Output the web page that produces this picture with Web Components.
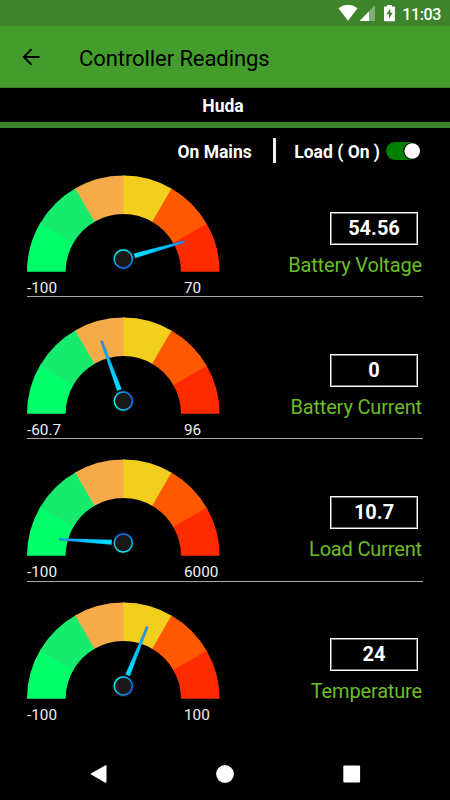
<!DOCTYPE html>
<html lang="en">
<head>
<meta charset="utf-8">
<title>Controller Readings</title>
<style>
    body {
        margin: 0;
        background: #000;
        font-family: Roboto, "Noto Sans", sans-serif;
    }
</style>
</head>
<body>
<controller-screen>
    <status-bar time="11:03"></status-bar>
    <app-bar>Controller Readings</app-bar>
    <site-name>Huda</site-name>
    <power-status mains="On Mains" load="Load ( On )"></power-status>
    <reading-row label="Battery Voltage" value="54.56" min="-100" max="70" angle="74.1"></reading-row>
    <reading-row label="Battery Current" value="0" min="-60.7" max="96" angle="-19.9"></reading-row>
    <reading-row label="Load Current" value="10.7" min="-100" max="6000" angle="-86.6"></reading-row>
    <reading-row label="Temperature" value="24" min="-100" max="100" angle="22" last></reading-row>
    <nav-bar slot="nav"></nav-bar>
</controller-screen>

<script>
class ControllerScreen extends HTMLElement {
    connectedCallback() {
        this.attachShadow({ mode: "open" });
        this.shadowRoot.innerHTML = `
            <style>
                :host {
                    display: flex;
                    flex-direction: column;
                    width: 450px;
                    height: 800px;
                    overflow: hidden;
                    background: #000;
                    color: #fff;
                }

                main {
                    flex: 1;
                    min-height: 0;
                }
            </style>
            <main><slot></slot></main>
            <slot name="nav"></slot>
        `;
    }
}

class StatusBar extends HTMLElement {
    connectedCallback() {
        this.attachShadow({ mode: "open" });
        this.shadowRoot.innerHTML = `
            <style>
                :host {
                    display: flex;
                    justify-content: flex-end;
                    align-items: center;
                    height: 26px;
                    padding-right: 9px;
                    box-sizing: border-box;
                    background: #3d842b;
                }

                span {
                    margin: 3px 0 0 6px;
                    font-size: 16px;
                    line-height: 20px;
                    font-weight: 500;
                    letter-spacing: -0.35px;
                }
            </style>
            <svg width="58" height="26" viewBox="0 0 58 26" fill="#fff">
                <path d="M0.5 8.2Q10 1.4 19.5 8.2L10 20.8Z"/>
                <path d="M37 5V21H21.5Z" opacity=".35"/>
                <path d="M31 11.4V21H21.5Z"/>
                <path d="M46.8 6.6h2.2V5h5v1.6h2.2q.8 0 .8.8v13q0 .8-.8.8h-9.4q-.8 0-.8-.8v-13q0-.8.8-.8z"/>
                <path d="M52.3 8.6L48.4 14.2H51V18.8L54.7 12.8H52.3Z" fill="#3d842b"/>
            </svg>
            <span>${this.getAttribute("time")}</span>
        `;
    }
}

class AppBar extends HTMLElement {
    connectedCallback() {
        this.attachShadow({ mode: "open" });
        this.shadowRoot.innerHTML = `
            <style>
                :host {
                    display: flex;
                    align-items: center;
                    height: 62px;
                    padding: 0 22px;
                    gap: 39px;
                    box-sizing: border-box;
                    border-bottom: 1px solid #3d842b;
                    background: #439c2c;
                    color: #000;
                    font-size: 22px;
                    letter-spacing: -0.08px;
                }

                slot {
                    display: block;
                    padding-top: 3px;
                }
            </style>
            <svg width="18" height="18" viewBox="0 0 18 18" fill="none" stroke="#000" stroke-width="1.9">
                <path d="M17.6 9H1.8M9.6 1.2L1.8 9L9.6 16.8"/>
            </svg>
            <slot></slot>
        `;
    }
}

class SiteName extends HTMLElement {
    connectedCallback() {
        this.attachShadow({ mode: "open" });
        this.shadowRoot.innerHTML = `
            <style>
                :host {
                    display: block;
                    height: 40px;
                    box-sizing: border-box;
                    border-bottom: 6px solid #3d842b;
                    font-size: 17.5px;
                    font-weight: bold;
                    line-height: 36px;
                    text-align: center;
                    text-indent: -4px;
                }
            </style>
            <slot></slot>
        `;
    }
}

class PowerStatus extends HTMLElement {
    connectedCallback() {
        this.attachShadow({ mode: "open" });
        this.shadowRoot.innerHTML = `
            <style>
                :host {
                    display: flex;
                    justify-content: flex-end;
                    align-items: center;
                    height: 47px;
                    padding: 0 30px 1px 0;
                    box-sizing: border-box;
                    font-size: 17.5px;
                    font-weight: bold;
                }

                span {
                    padding-top: 1px;
                }

                .bar {
                    width: 3px;
                    height: 25px;
                    margin: 0 18px 1px 21.5px;
                    background: #f0f0f0;
                }

                svg {
                    margin-left: 6px;
                }
            </style>
            <span>${this.getAttribute("mains")}</span>
            <div class="bar"></div>
            <span>${this.getAttribute("load")}</span>
            <svg width="34" height="18" viewBox="0 0 34 18">
                <rect width="34" height="18" rx="9" fill="#008000"/>
                <circle cx="26" cy="9" r="8.7" fill="#000"/>
                <circle cx="26.2" cy="9" r="7.8" fill="#fff"/>
            </svg>
        `;
    }
}

// Half-circle dial, angle is the needle rotation from straight up
class GaugeDial extends HTMLElement {
    connectedCallback() {
        this.attachShadow({ mode: "open" });
        const colors = ["#00ff6b", "#17eb6d", "#f5ab49", "#f2cf1f", "#ff5900", "#ff2b00"];
        const cx = 96.3, cy = 96.8, outer = 96.3, inner = 57.7;

        const point = (radius, step) => {
            const a = Math.PI - step * Math.PI / 6;
            return `${(cx + radius * Math.cos(a)).toFixed(2)} ${(cy - radius * Math.sin(a)).toFixed(2)}`;
        };
        // each segment runs a little under the next one so no seam shows
        const arcs = colors.map((color, i) => {
            const end = Math.min(i + 1.03, 6);
            return `<path fill="${color}" d="M${point(outer, i)}
                A${outer} ${outer} 0 0 1 ${point(outer, end)}
                L${point(inner, end)}
                A${inner} ${inner} 0 0 0 ${point(inner, i)}Z"/>`;
        }).join("");

        this.shadowRoot.innerHTML = `
            <style>
                :host {
                    display: block;
                    height: 98px;
                }

                svg {
                    display: block;
                }
            </style>
            <svg width="193" height="98" viewBox="0 0 193 98">
                <defs>
                    <linearGradient id="needle" gradientUnits="userSpaceOnUse" x1="0" y1="-12" x2="0" y2="-64">
                        <stop offset="0" stop-color="#00e0ff"/>
                        <stop offset=".5" stop-color="#00c4ff"/>
                        <stop offset="1" stop-color="#1c8cf0"/>
                    </linearGradient>
                    <linearGradient id="ring">
                        <stop offset="0" stop-color="#00f2f2"/>
                        <stop offset="1" stop-color="#0a6cff"/>
                    </linearGradient>
                </defs>
                ${arcs}
                <g transform="translate(96.3 84) rotate(${this.getAttribute("angle")})">
                    <path d="M-2.5 -11.5L-1 -64H1L2.5 -11.5Z" fill="url(#needle)" stroke="#036" stroke-opacity=".25" stroke-width=".6"/>
                    <circle r="11" fill="#151515"/>
                    <circle r="9" fill="#181818" stroke="url(#ring)" stroke-width="1.5"/>
                </g>
            </svg>
        `;
    }
}

class ReadingRow extends HTMLElement {
    connectedCallback() {
        this.attachShadow({ mode: "open" });
        const attr = name => this.getAttribute(name);

        this.shadowRoot.innerHTML = `
            <style>
                :host {
                    display: grid;
                    grid-template-columns: 193px 1fr;
                    height: 122.2px;
                    margin: 0 27px 20px;
                    box-sizing: border-box;
                    border-bottom: 1.2px solid #a8a8a8;
                }

                :host([last]) {
                    border-color: transparent;
                    margin-bottom: 0;
                }

                .range {
                    display: grid;
                    grid-template-columns: 157px auto;
                    margin-top: 5px;
                    font-size: 15.3px;
                    line-height: 20px;
                    color: #f0f0f0;
                }

                .reading {
                    display: flex;
                    flex-direction: column;
                    align-items: flex-end;
                    padding-top: 36.5px;
                }

                .value {
                    width: 88px;
                    height: 33px;
                    margin-right: 5px;
                    box-sizing: border-box;
                    border: 1px solid #fff;
                    box-shadow: inset 0 0 0 1px #777;
                    font-size: 20px;
                    font-weight: bold;
                    line-height: 31px;
                    text-align: center;
                }

                .label {
                    margin: 8px 1px 0 0;
                    font-size: 20px;
                    line-height: 25px;
                    letter-spacing: -0.16px;
                    color: #6abf26;
                }
            </style>
            <div>
                <gauge-dial angle="${attr("angle")}"></gauge-dial>
                <div class="range"><span>${attr("min")}</span><span>${attr("max")}</span></div>
            </div>
            <div class="reading">
                <div class="value">${attr("value")}</div>
                <div class="label">${attr("label")}</div>
            </div>
        `;
    }
}

class NavBar extends HTMLElement {
    connectedCallback() {
        this.attachShadow({ mode: "open" });
        this.shadowRoot.innerHTML = `
            <style>
                :host {
                    display: flex;
                    justify-content: space-between;
                    align-items: center;
                    height: 52px;
                    padding: 0 89px 0 90px;
                }
            </style>
            <svg width="18" height="18" viewBox="0 0 18 18" fill="#fff"><path d="M1.4 8.3L15 .4Q16.5-.2 16.5 1.2V16.8Q16.5 18.2 15 17.6L1.4 9.7Q.2 9 1.4 8.3Z"/></svg>
            <svg width="20" height="18" viewBox="0 0 20 18" fill="#fff"><circle cx="9" cy="9" r="8.9"/></svg>
            <svg width="18" height="18" viewBox="0 0 18 18" fill="#fff"><rect x="0.3" y=".6" width="16.8" height="17" rx="1"/></svg>
        `;
    }
}

customElements.define("controller-screen", ControllerScreen);
customElements.define("status-bar", StatusBar);
customElements.define("app-bar", AppBar);
customElements.define("site-name", SiteName);
customElements.define("power-status", PowerStatus);
customElements.define("gauge-dial", GaugeDial);
customElements.define("reading-row", ReadingRow);
customElements.define("nav-bar", NavBar);
</script>
</body>
</html>
